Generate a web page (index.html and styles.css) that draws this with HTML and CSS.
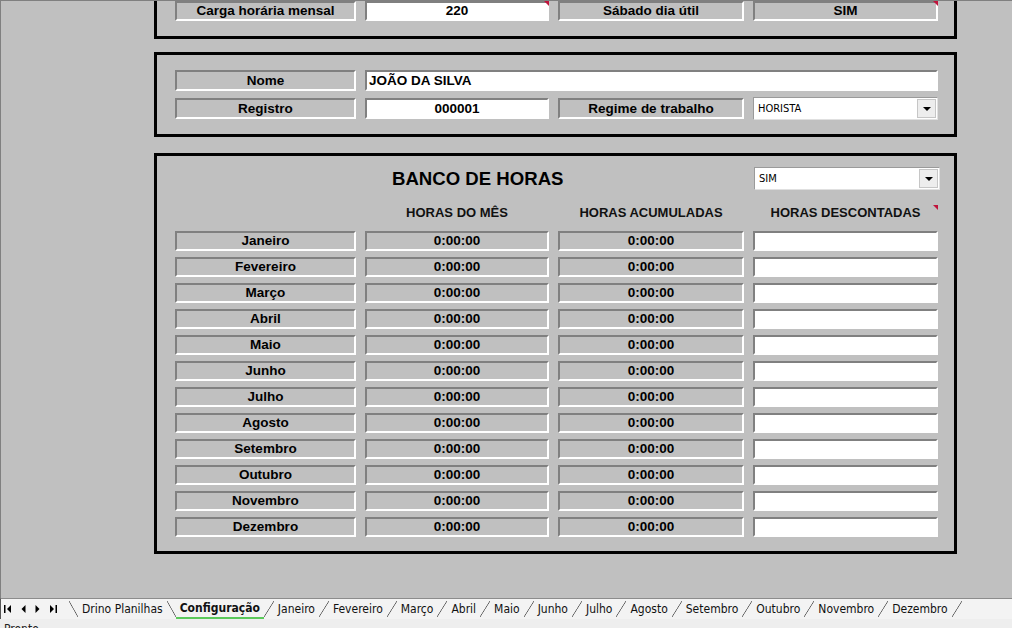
FILE: index.html
```html
<!DOCTYPE html>
<html lang="pt-BR">
<head>
    <meta charset="UTF-8">
    <meta name="viewport" content="width=device-width, initial-scale=1.0">
    <title>Configuração - Drino Planilhas</title>
    <link rel="stylesheet" href="styles.css">
</head>
<body>
    <div class="sheet">
        <div class="box box-top">
            <div class="row">
                <div class="cell lbl">Carga horária mensal</div>
                <div class="cell val note">220</div>
                <div class="cell lbl">Sábado dia útil</div>
                <div class="cell lbl note">SIM</div>
            </div>
        </div>

        <div class="box box-func">
            <div class="row row-tall">
                <div class="cell lbl">Nome</div>
                <div class="cell val wide">JOÃO DA SILVA</div>
            </div>
            <div class="row row-tall">
                <div class="cell lbl">Registro</div>
                <div class="cell val">000001</div>
                <div class="cell lbl">Regime de trabalho</div>
                <div class="select">
                    <span>HORISTA</span>
                    <span class="select-btn"><i class="arrow"></i></span>
                </div>
            </div>
        </div>

        <div class="box box-banco">
            <div class="row banco-head">
                <div class="banco-title">BANCO DE HORAS</div>
                <div class="select select-big">
                    <span>SIM</span>
                    <span class="select-btn"><i class="arrow"></i></span>
                </div>
            </div>
            <div class="row col-heads">
                <div></div>
                <div class="col-head">HORAS DO MÊS</div>
                <div class="col-head">HORAS ACUMULADAS</div>
                <div class="col-head note">HORAS DESCONTADAS</div>
            </div>
            <div class="months">
                <div class="row"><div class="cell lbl">Janeiro</div><div class="cell lbl">0:00:00</div><div class="cell lbl">0:00:00</div><div class="cell val"></div></div>
                <div class="row"><div class="cell lbl">Fevereiro</div><div class="cell lbl">0:00:00</div><div class="cell lbl">0:00:00</div><div class="cell val"></div></div>
                <div class="row"><div class="cell lbl">Março</div><div class="cell lbl">0:00:00</div><div class="cell lbl">0:00:00</div><div class="cell val"></div></div>
                <div class="row"><div class="cell lbl">Abril</div><div class="cell lbl">0:00:00</div><div class="cell lbl">0:00:00</div><div class="cell val"></div></div>
                <div class="row"><div class="cell lbl">Maio</div><div class="cell lbl">0:00:00</div><div class="cell lbl">0:00:00</div><div class="cell val"></div></div>
                <div class="row"><div class="cell lbl">Junho</div><div class="cell lbl">0:00:00</div><div class="cell lbl">0:00:00</div><div class="cell val"></div></div>
                <div class="row"><div class="cell lbl">Julho</div><div class="cell lbl">0:00:00</div><div class="cell lbl">0:00:00</div><div class="cell val"></div></div>
                <div class="row"><div class="cell lbl">Agosto</div><div class="cell lbl">0:00:00</div><div class="cell lbl">0:00:00</div><div class="cell val"></div></div>
                <div class="row"><div class="cell lbl">Setembro</div><div class="cell lbl">0:00:00</div><div class="cell lbl">0:00:00</div><div class="cell val"></div></div>
                <div class="row"><div class="cell lbl">Outubro</div><div class="cell lbl">0:00:00</div><div class="cell lbl">0:00:00</div><div class="cell val"></div></div>
                <div class="row"><div class="cell lbl">Novembro</div><div class="cell lbl">0:00:00</div><div class="cell lbl">0:00:00</div><div class="cell val"></div></div>
                <div class="row"><div class="cell lbl">Dezembro</div><div class="cell lbl">0:00:00</div><div class="cell lbl">0:00:00</div><div class="cell val"></div></div>
            </div>
        </div>
    </div>

    <div class="tabbar">
        <div class="nav">
            <svg width="8" height="8" viewBox="0 0 8 8"><rect x="0" y="0" width="1.5" height="8" fill="#000"/><polygon points="7,0 7,8 3,4" fill="#000"/></svg>
            <svg width="5" height="8" viewBox="0 0 5 8"><polygon points="4.5,0 4.5,8 0.5,4" fill="#000"/></svg>
            <svg width="5" height="8" viewBox="0 0 5 8"><polygon points="0.5,0 0.5,8 4.5,4" fill="#000"/></svg>
            <svg width="8" height="8" viewBox="0 0 8 8"><polygon points="1,0 1,8 5,4" fill="#000"/><rect x="6.5" y="0" width="1.5" height="8" fill="#000"/></svg>
        </div>
        <span class="sep back"></span>
        <span class="tab">Drino Planilhas</span>
        <span class="sep back"></span>
        <span class="tab active">Configuração</span>
        <span class="sep"></span>
        <span class="tab">Janeiro</span>
        <span class="sep"></span>
        <span class="tab">Fevereiro</span>
        <span class="sep"></span>
        <span class="tab">Março</span>
        <span class="sep"></span>
        <span class="tab">Abril</span>
        <span class="sep"></span>
        <span class="tab">Maio</span>
        <span class="sep"></span>
        <span class="tab">Junho</span>
        <span class="sep"></span>
        <span class="tab">Julho</span>
        <span class="sep"></span>
        <span class="tab">Agosto</span>
        <span class="sep"></span>
        <span class="tab">Setembro</span>
        <span class="sep"></span>
        <span class="tab">Outubro</span>
        <span class="sep"></span>
        <span class="tab">Novembro</span>
        <span class="sep"></span>
        <span class="tab">Dezembro</span>
        <span class="sep"></span>
    </div>
    <div class="statusbar">Pronto</div>
</body>
</html>
```

FILE: styles.css
```css
html, body {
    margin: 0;
    padding: 0;
    height: 628px;
    overflow: hidden;
}

body {
    font-family: 'Liberation Sans', Arial, sans-serif;
    color: #000;
    background: #eeeeee;
}

.sheet {
    height: 598px;
    box-sizing: border-box;
    overflow: hidden;
    background: #c0c0c0;
    border-top: 1px solid #808080;
    border-left: 1px solid #808080;
    padding-left: 153px;
}

/* caixas */
.box {
    width: 803px;
    box-sizing: border-box;
    border: 3px solid #000;
    padding: 15px 16px 15px 18px;
}

.box-top {
    margin-top: -18px;
}

.box-func {
    margin-top: 13px;
}

.box-banco {
    margin-top: 16px;
    padding-top: 11px;
    padding-bottom: 14px;
}

.row {
    display: grid;
    grid-template-columns: 181px 184px 186px 185px;
    column-gap: 9px;
}

.row-tall + .row-tall {
    margin-top: 7px;
}

.row-tall .cell {
    height: 21px;
    line-height: 17px;
}

/* celulas */
.cell {
    position: relative;
    height: 20px;
    box-sizing: border-box;
    border-top: 2px solid #808080;
    border-left: 2px solid #808080;
    border-bottom: 2px solid #fff;
    border-right: 2px solid #fff;
    font-size: 13.5px;
    font-weight: bold;
    line-height: 16px;
    text-align: center;
    white-space: nowrap;
}

.lbl {
    background: #c0c0c0;
}

.val {
    background: #fff;
}

.wide {
    grid-column: 2 / span 3;
    text-align: left;
    padding-left: 2px;
}

.note::after {
    content: "";
    position: absolute;
    top: -2px;
    right: -2px;
    width: 0;
    height: 0;
    border-top: 5px solid #c0143c;
    border-left: 5px solid transparent;
}

/* lista suspensa */
.select {
    display: flex;
    align-items: center;
    justify-content: space-between;
    height: 23px;
    margin: -1px 0;
    box-sizing: border-box;
    background: #fff;
    border-top: 1px solid #9a9a9a;
    border-left: 1px solid #9a9a9a;
    border-bottom: 1px solid #e0e0e0;
    border-right: 1px solid #e0e0e0;
    padding: 0 1px 0 4px;
    font-family: 'DejaVu Sans Condensed', 'Liberation Sans', sans-serif;
    font-size: 11px;
}

.select-btn {
    width: 19px;
    height: 19px;
    box-sizing: border-box;
    display: flex;
    align-items: center;
    justify-content: center;
    background: #ededed;
    border: 1px solid #c6c6c6;
}

.arrow {
    width: 0;
    height: 0;
    border-left: 4px solid transparent;
    border-right: 4px solid transparent;
    border-top: 4px solid #000;
}

.banco-head {
    align-items: center;
}

.banco-title {
    grid-column: 2 / span 2;
    padding-left: 27px;
    font-size: 18.6px;
    font-weight: bold;
    line-height: 23px;
}

.select-big {
    margin: 0 0 0 1px;
    width: 186px;
}

.col-heads {
    margin-top: 13px;
}

.col-head {
    position: relative;
    height: 20px;
    font-size: 13px;
    font-weight: bold;
    line-height: 20px;
    text-align: center;
    color: #111;
}

.col-head.note::after {
    top: 2px;
    right: 0;
}

.months {
    margin-top: 8px;
    display: flex;
    flex-direction: column;
    gap: 6px;
}

/* abas */
.tabbar {
    height: 21px;
    box-sizing: border-box;
    display: flex;
    align-items: center;
    background: #f3f3f3;
    border-top: 1px solid #8c8c8c;
    border-left: 1px solid #555;
    font-family: 'DejaVu Sans Condensed', 'Liberation Sans', sans-serif;
    font-size: 12px;
    color: #111;
}

.nav {
    display: flex;
    align-items: center;
    gap: 9px;
    padding-left: 3px;
    width: 65px;
}

.tab {
    padding: 0 4px;
    line-height: 19px;
    white-space: nowrap;
}

.tab.active {
    font-weight: bold;
    border-bottom: 2px solid #5bc95b;
    line-height: 17px;
}

.sep {
    width: 10px;
    height: 16px;
    background: linear-gradient(to bottom right, transparent calc(50% - 0.7px), #555 50%, transparent calc(50% + 0.7px));
}

.sep.back {
    width: 9px;
    background: linear-gradient(to top right, transparent calc(50% - 0.7px), #555 50%, transparent calc(50% + 0.7px));
}

.statusbar {
    height: 9px;
    padding: 3px 0 0 4px;
    font-family: 'DejaVu Sans Condensed', 'Liberation Sans', sans-serif;
    font-size: 12px;
    color: #222;
    background: #eeeeee;
}
```
